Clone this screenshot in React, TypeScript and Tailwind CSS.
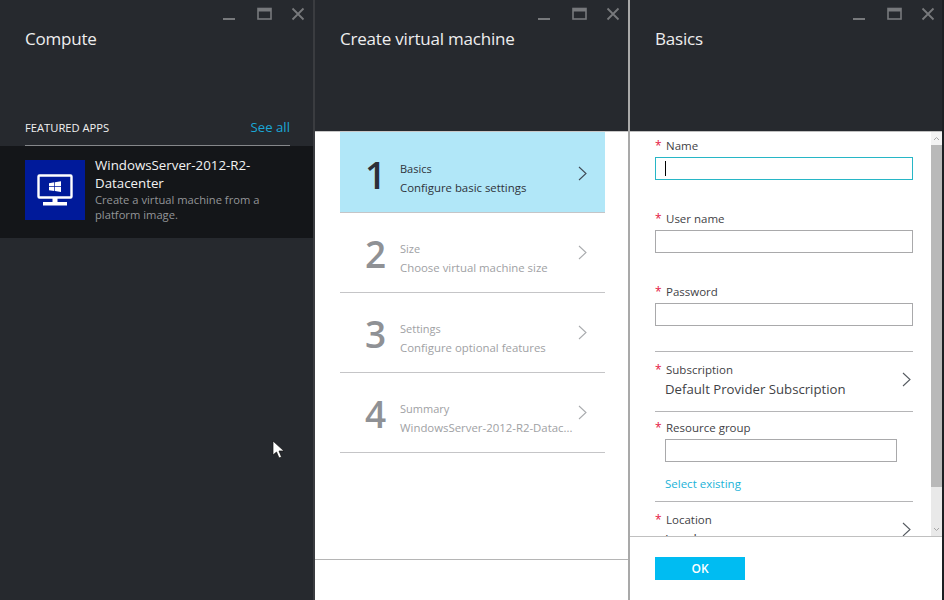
import React from 'react';

const font = { fontFamily: '"Open Sans", "Noto Sans", sans-serif' };

const PanelHeader = ({ title, short }: { title: string; short?: boolean }) => (
  <div className={`relative shrink-0 bg-[#26292e] pl-[25px] pt-[27px] ${short ? 'h-[112px]' : 'h-[131px]'}`}>
    <svg width="90" height="14" viewBox="0 0 90 14" fill="none" className="absolute left-[215px] top-[7px] text-[#77797c]">
      <rect x="8" y="11" width="12" height="2" fill="currentColor" />
      <rect x="43" y="1.5" width="13" height="10.5" stroke="currentColor" strokeWidth="1.6" />
      <rect x="43" y="1.5" width="13" height="3" fill="currentColor" />
      <path d="M77.5 1.5 L88.5 12.5 M88.5 1.5 L77.5 12.5" stroke="currentColor" strokeWidth="1.8" />
    </svg>
    <h2 className="text-[17px] leading-[24px] tracking-[-0.2px] text-[#eeeeee]">{title}</h2>
  </div>
);

const Chevron = ({ color }: { color: string }) => (
  <svg width="9" height="15" viewBox="0 0 9 15" fill="none">
    <path d="M1 1 L8 7.5 L1 14" stroke={color} strokeWidth="1.1" />
  </svg>
);

const steps = [
  { n: '1', title: 'Basics', sub: 'Configure basic settings', active: true },
  { n: '2', title: 'Size', sub: 'Choose virtual machine size', active: false },
  { n: '3', title: 'Settings', sub: 'Configure optional features', active: false },
  { n: '4', title: 'Summary', sub: 'WindowsServer-2012-R2-Datac...', active: false },
];

const Label = ({ text }: { text: string }) => (
  <div className="flex h-[14px] items-center text-[11.5px] leading-[14px] text-[#3f4246]">
    <span className="w-[11px] text-[12px] text-[#e4173e]">*</span>
    <span>{text}</span>
  </div>
);

const TextBox = ({ focused }: { focused?: boolean }) => (
  <div className={`mt-[4px] flex h-[23px] w-[258px] items-center border bg-white pl-[9px] ${focused ? 'border-[#27b6c6]' : 'border-[#a9a9ab]'}`}>
    {focused && <div className="h-[15px] w-px bg-black" />}
  </div>
);

const App = () => {
  return (
    <div className="flex h-[600px] w-[944px] overflow-hidden bg-[#1d1f23]" style={font}>
      {/* Compute */}
      <section className="flex h-full w-[315px] shrink-0 flex-col border-r-2 border-[#3a3c40] bg-[#26292e]">
        <PanelHeader title="Compute" short />
        <div className="mt-[6px] flex items-baseline justify-between pb-[8px] pl-[25px] pr-[23px]">
          <span className="text-[11.2px] leading-[18px] text-[#f0f0f0]">FEATURED APPS</span>
          <span className="text-[13.2px] leading-[18px] text-[#1aa7d6]">See all</span>
        </div>
        <div className="ml-[25px] mr-[23px] h-px bg-[#85878a]" />
        <div className="flex h-[92px] gap-[10px] bg-[#141619] pl-[25px] pt-[14px]">
          <div className="flex h-[60px] w-[60px] shrink-0 items-center justify-center bg-[#001a9a]">
            <svg width="36" height="33" viewBox="0 0 36 33" fill="none">
              <rect x="1.5" y="1.5" width="33" height="22" rx="1" stroke="#fff" strokeWidth="2.4" />
              <rect x="15.5" y="24" width="5" height="4" fill="#fff" />
              <rect x="6" y="28" width="24" height="3.5" fill="#fff" />
              <path d="M12 9.2 L17.3 8.3 V12.3 H12 Z M18 8.2 L24 7.3 V12.3 H18 Z M12 13 H17.3 V17 L12 16.2 Z M18 13 H24 V18 L18 17.1 Z" fill="#fff" />
            </svg>
          </div>
          <div className="-mt-[4px] w-[185px]">
            <div className="text-[13.3px] leading-[18px] text-[#f2f2f2]">WindowsServer-2012-R2-Datacenter</div>
            <div className="text-[11.2px] leading-[15px] text-[#939598]">Create a virtual machine from a platform image.</div>
          </div>
        </div>
        <div className="relative flex-1">
          {/* mouse pointer */}
          <svg width="14" height="20" viewBox="0 0 14 20" className="absolute left-[272px] top-[202px]">
            <path d="M1 1 L1 15 L4.5 12 L7 18 L9.5 17 L7 11 L12 11 Z" fill="#fff" stroke="#111" strokeWidth="0.7" />
          </svg>
        </div>
      </section>

      {/* Create virtual machine */}
      <section className="flex h-full w-[315px] shrink-0 flex-col border-r-2 border-[#a9a9a9] bg-white">
        <PanelHeader title="Create virtual machine" />
        <div className="flex-1 border-t border-[#c8c8c8] pl-[25px] pr-[23px]">
          {steps.map((s) => (
            <div
              key={s.n}
              className={`flex items-center border-b border-[#c5c5c7] pl-[25px] pr-[18px] ${s.active ? 'h-[81px] bg-[#b1e7f8]' : 'h-[80px]'}`}
            >
              <span className={`w-[35px] text-[37px] font-semibold leading-none ${s.active ? 'pt-[4px] text-[#2c3038]' : 'pt-[2px] text-[#8f9195]'}`}>{s.n}</span>
              <div className={`min-w-0 flex-1 whitespace-nowrap ${s.active ? 'pt-[12px] text-[#2f333a]' : 'pt-[10px] text-[#a0a1a4]'}`}>
                <div className="text-[11px] leading-[19px]">{s.title}</div>
                <div className="text-[11.4px] leading-[19px]">{s.sub}</div>
              </div>
              <div className={s.active ? 'pt-[2px]' : ''}>
                <Chevron color={s.active ? '#3f4a55' : '#a9abae'} />
              </div>
            </div>
          ))}
        </div>
        <div className="h-[41px] shrink-0 border-t border-[#b5b5b5]" />
      </section>

      {/* Basics */}
      <section className="relative flex h-full w-[312px] shrink-0 flex-col bg-white">
        <div className="absolute left-[10px] top-0 h-[1px] w-[40px] bg-[#e8912d]" />
        <PanelHeader title="Basics" />
        <div className="flex h-[406px] shrink-0 border-b border-t border-[#c0c0c0]">
          <div className="min-w-0 flex-1 overflow-hidden pl-[25px] pr-[18px] pt-[7px]">
            <Label text="Name" />
            <TextBox focused />
            <div className="mt-[32px]"><Label text="User name" /><TextBox /></div>
            <div className="mt-[32px]"><Label text="Password" /><TextBox /></div>
            <div className="mt-[25px] w-[258px] border-t border-[#b5b5b7] pb-[12px] pt-[11px]">
              <div className="flex items-center justify-between pr-[2px]">
                <div>
                  <Label text="Subscription" />
                  <div className="mt-[2px] pl-[10px] text-[13.2px] leading-[20px] text-[#3f4246]">Default Provider Subscription</div>
                </div>
                <div className="pb-[3px]"><Chevron color="#555a60" /></div>
              </div>
            </div>
            <div className="w-[258px] border-t border-[#b5b5b7] pb-[8px] pt-[9px]">
              <Label text="Resource group" />
              <div className="ml-[10px] mt-[4px] h-[23px] w-[232px] border border-[#a9a9ab]" />
              <div className="ml-[10px] mt-[13px] text-[11.5px] leading-[18px] text-[#1ab3d8]">Select existing</div>
            </div>
            <div className="flex w-[258px] items-start justify-between border-t border-[#b5b5b7] pr-[2px] pt-[11px]">
              <div>
                <Label text="Location" />
                <div className="mt-[2px] pl-[10px] text-[13.2px] leading-[20px] text-[#3f4246]">Local</div>
              </div>
              <div className="mt-[9px]"><Chevron color="#555a60" /></div>
            </div>
          </div>
          {/* scrollbar */}
          <div className="flex w-[11px] shrink-0 flex-col bg-[#e9e9e9]">
            <div className="flex h-[13px] items-center justify-center bg-[#f3f3f3]">
              <svg width="7" height="5" viewBox="0 0 7 5" fill="none"><path d="M1 4 L3.5 1.5 L6 4" stroke="#a5a5a5" /></svg>
            </div>
            <div className="h-[342px] bg-[#b9b9b9]" />
            <div className="flex-1" />
            <div className="flex h-[13px] items-center justify-center">
              <svg width="7" height="5" viewBox="0 0 7 5" fill="none"><path d="M1 1 L3.5 3.5 L6 1" stroke="#a5a5a5" /></svg>
            </div>
          </div>
        </div>
        <div className="flex-1 pl-[25px] pt-[20px]">
          <div className="flex h-[23px] w-[90px] items-center justify-center bg-[#00bcf2] text-[12px] font-semibold text-white">OK</div>
        </div>
      </section>
    </div>
  );
};

export default App;
